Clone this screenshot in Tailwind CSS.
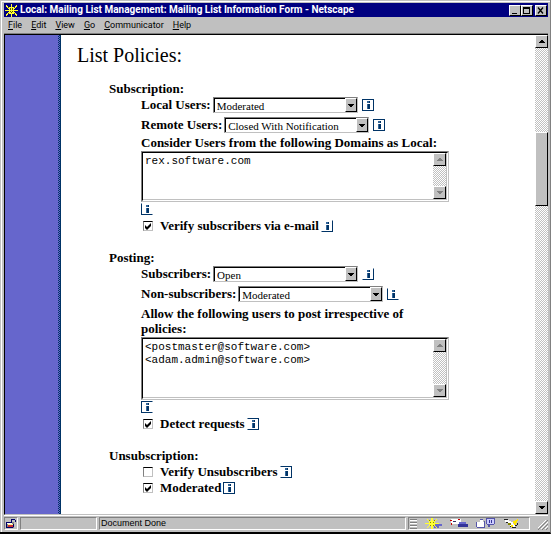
<!DOCTYPE html>
<html lang="en">
<head>
<meta charset="utf-8">
<title>Local: Mailing List Management: Mailing List Information Form - Netscape</title>
<script src="https://cdn.jsdelivr.net/npm/@tailwindcss/browser@4"></script>
</head>
<body class="bg-[#c0c0c0] text-black">
<svg class="hidden">
  <symbol id="i" viewBox="0 0 10 10" shape-rendering="crispEdges"><path d="M4 1h2v2H4zM4 4h2v5H4z" fill="#336699"/><path d="M6 1h1v2H6zM5 4h2v5H5z" fill="#003366"/></symbol>
  <symbol id="up" viewBox="0 0 6 3"><path d="M2 0h2v1h1v1h1v1H0V2h1V1h1z" fill="currentColor"/></symbol>
  <symbol id="down" viewBox="0 0 6 3"><path d="M0 0h6v1H5v1H4v1H2V2H1V1H0z" fill="currentColor"/></symbol>
  <symbol id="sun" viewBox="0 0 14 13" shape-rendering="crispEdges"><path d="M1 1l12 11M13 1L1 12M7 0v13M0 6.500h14" stroke="#ffff33" stroke-width="1.500"/><path d="M4 3h6v7H4z" fill="#ffff33"/><path d="M3 3h1v1H3zM10 3h1v1h-1zM3 9h1v1H3zM10 9h1v1h-1zM5 4h1v2H5zM8 4h1v2H8zM5 7h1v1H5zM6 8h2v1H6zM8 7h1v1H8z" fill="#555500"/></symbol>
</svg>
<div class="min-h-screen flex flex-col pt-px pl-px border-b-2 border-r border-b-black border-r-[#808080]">
<div class="flex-1 flex flex-col border-t border-l border-white pt-px pl-[2px] pr-[2px]">

  <header class="h-[14px] flex items-center bg-[#000080] text-white pl-px pr-px">
    <svg class="w-[13px] h-[13px] mr-[2px]"><use href="#sun"/></svg>
    <h1 class="flex-1 font-[Roboto,sans-serif] font-bold text-[10px] leading-[14px] whitespace-nowrap">Local: Mailing List Management: Mailing List Information Form - Netscape</h1>
    <div class="flex text-black">
      <button aria-label="Minimize" class="w-3 h-[11px] bg-[#c0c0c0] border border-t-white border-l-white border-r-black border-b-black"><svg class="w-full h-full" viewBox="0 0 10 9"><path d="M2 7h5v1H2z"/></svg></button>
      <button aria-label="Maximize" class="w-3 h-[11px] bg-[#c0c0c0] border border-t-white border-l-white border-r-black border-b-black"><svg class="w-full h-full" viewBox="0 0 10 9"><path d="M1 1h7v7H1zM2 3v4h5V3z" fill-rule="evenodd"/></svg></button>
      <button aria-label="Close" class="w-3 h-[11px] ml-[2px] bg-[#c0c0c0] border border-t-white border-l-white border-r-black border-b-black"><svg class="w-full h-full" viewBox="0 0 10 9"><path d="M2 1.500l5 6M7 1.500l-5 6" stroke="#000" stroke-width="1.300"/></svg></button>
    </div>
  </header>

  <nav class="h-4 flex items-center gap-[9px] pl-1 font-[Roboto,sans-serif] text-[9px] leading-4">
    <button><u>F</u>ile</button><button><u>E</u>dit</button><button><u>V</u>iew</button><button><u>G</u>o</button><button><u>C</u>ommunicator</button><button><u>H</u>elp</button>
  </nav>

  <div class="flex-1 flex border-t border-[#808080]">
  <div class="flex-1 flex border-t border-l border-black border-b border-b-[#c0c0c0]">
    <aside class="w-[53px] bg-[#6666cc]"></aside>
    <div class="w-[3px] bg-[repeating-conic-gradient(#003366_0_25%,#6666cc_0_50%)] bg-[length:2px_2px] border-r border-[#003366]"></div>
    <main class="flex-1 bg-white pt-[10px] pl-4 pb-4 font-['Liberation_Serif',serif]">
      <h2 class="text-[20px] leading-5">List Policies:</h2>
      <form class="pl-8 text-[13px] leading-4 font-bold">

        <section class="pt-4">
          <h3>Subscription:</h3>
          <div class="pl-8">
            <div class="h-5 flex items-start">
              <label for="lu">Local Users:</label>
              <div class="ml-[2px] w-[145px] h-4 flex bg-white border border-[#c0c0c0] border-t-[#808080] border-l-[#808080]">
                <select id="lu" class="appearance-none flex-1 min-w-0 pl-[2px] border-t border-l border-black font-normal text-[11px] leading-3 outline-none"><option>Moderated</option></select>
                <span class="w-3 flex items-center justify-center bg-[#c0c0c0] border border-white border-r-black border-b-black pointer-events-none"><svg class="w-[6px] h-[3px]"><use href="#down"/></svg></span>
              </div>
              <a href="#" aria-label="Info" class="ml-1 mt-[2px] w-3 h-3 block border border-[#003366]"><svg class="w-[10px] h-[10px]"><use href="#i"/></svg></a>
            </div>
            <div class="h-[18px] flex items-start">
              <label for="ru">Remote Users:</label>
              <div class="ml-[2px] w-[145px] h-4 flex bg-white border border-[#c0c0c0] border-t-[#808080] border-l-[#808080]">
                <select id="ru" class="appearance-none flex-1 min-w-0 pl-[2px] border-t border-l border-black font-normal text-[11px] leading-3 outline-none"><option>Closed With Notification</option></select>
                <span class="w-3 flex items-center justify-center bg-[#c0c0c0] border border-white border-r-black border-b-black pointer-events-none"><svg class="w-[6px] h-[3px]"><use href="#down"/></svg></span>
              </div>
              <a href="#" aria-label="Info" class="ml-1 mt-[2px] w-3 h-3 block border border-[#003366]"><svg class="w-[10px] h-[10px]"><use href="#i"/></svg></a>
            </div>
            <label for="dom" class="block">Consider Users from the following Domains as Local:</label>
            <div class="w-[308px] h-[51px] border border-[#c0c0c0] border-t-[#808080] border-l-[#808080]">
              <div class="h-full flex border border-white border-t-black border-l-black">
                <div class="flex-1 flex border-b border-r border-[#c0c0c0]">
                <textarea id="dom" class="flex-1 resize-none overflow-hidden pl-[2px] pt-[2px] font-['Liberation_Mono',monospace] font-normal text-[11px] leading-[13px] outline-none">rex.software.com</textarea>
                <div class="w-[13px] flex flex-col justify-between text-[#808080] bg-[repeating-conic-gradient(#c0c0c0_0_25%,#fff_0_50%)] bg-[length:2px_2px]">
                  <span class="h-[13px] flex items-center justify-center bg-[#c0c0c0] border border-white border-r-black border-b-black"><svg class="w-[6px] h-[3px]"><use href="#up"/></svg></span>
                  <span class="h-[13px] flex items-center justify-center bg-[#c0c0c0] border border-white border-r-black border-b-black"><svg class="w-[6px] h-[3px]"><use href="#down"/></svg></span>
                </div>
                </div>
              </div>
            </div>
            <a href="#" aria-label="Info" class="mt-px w-3 h-3 block border border-[#003366] border-t-transparent border-r-transparent"><svg class="w-[10px] h-[10px]"><use href="#i"/></svg></a>
            <div class="mt-[3px] flex items-center">
              <span class="relative ml-[2px] mr-[7px] w-[10px] h-[10px]"><input type="checkbox" id="vs" checked class="peer appearance-none block w-[10px] h-[10px] border border-[#c0c0c0] border-t-black border-l-[#808080] bg-white"><svg class="hidden peer-checked:block absolute inset-0 pointer-events-none" viewBox="0 0 10 10"><path d="M2 4v3l2 2 4-4V2L4 6z"/></svg></span>
              <label for="vs">Verify subscribers via e-mail</label>
              <a href="#" aria-label="Info" class="ml-[2px] w-3 h-3 block border border-[#003366] border-t-transparent border-l-transparent"><svg class="w-[10px] h-[10px]"><use href="#i"/></svg></a>
            </div>
          </div>
        </section>

        <section class="pt-4">
          <h3>Posting:</h3>
          <div class="pl-8">
            <div class="h-5 flex items-start">
              <label for="sb">Subscribers:</label>
              <div class="ml-[2px] w-[145px] h-4 flex bg-white border border-[#c0c0c0] border-t-[#808080] border-l-[#808080]">
                <select id="sb" class="appearance-none flex-1 min-w-0 pl-[2px] border-t border-l border-black font-normal text-[11px] leading-3 outline-none"><option>Open</option></select>
                <span class="w-3 flex items-center justify-center bg-[#c0c0c0] border border-white border-r-black border-b-black pointer-events-none"><svg class="w-[6px] h-[3px]"><use href="#down"/></svg></span>
              </div>
              <a href="#" aria-label="Info" class="ml-1 mt-[2px] w-3 h-3 block border border-[#003366] border-t-transparent border-l-transparent"><svg class="w-[10px] h-[10px]"><use href="#i"/></svg></a>
            </div>
            <div class="h-5 flex items-start">
              <label for="ns">Non-subscribers:</label>
              <div class="ml-[2px] w-[145px] h-4 flex bg-white border border-[#c0c0c0] border-t-[#808080] border-l-[#808080]">
                <select id="ns" class="appearance-none flex-1 min-w-0 pl-[2px] border-t border-l border-black font-normal text-[11px] leading-3 outline-none"><option>Moderated</option></select>
                <span class="w-3 flex items-center justify-center bg-[#c0c0c0] border border-white border-r-black border-b-black pointer-events-none"><svg class="w-[6px] h-[3px]"><use href="#down"/></svg></span>
              </div>
              <a href="#" aria-label="Info" class="ml-1 mt-[2px] w-3 h-3 block border border-[#003366] border-t-transparent border-r-transparent"><svg class="w-[10px] h-[10px]"><use href="#i"/></svg></a>
            </div>
            <label for="al" class="block w-[308px] leading-[15px]">Allow the following users to post irrespective of policies:</label>
            <div class="mt-px w-[308px] h-[63px] border border-[#c0c0c0] border-t-[#808080] border-l-[#808080]">
              <div class="h-full flex border border-white border-t-black border-l-black">
                <div class="flex-1 flex border-b border-r border-[#c0c0c0]">
                <textarea id="al" class="flex-1 resize-none overflow-hidden pl-[2px] pt-[2px] font-['Liberation_Mono',monospace] font-normal text-[11px] leading-[13px] outline-none">&lt;postmaster@software.com&gt;
&lt;adam.admin@software.com&gt;</textarea>
                <div class="w-[13px] flex flex-col justify-between text-[#808080] bg-[repeating-conic-gradient(#c0c0c0_0_25%,#fff_0_50%)] bg-[length:2px_2px]">
                  <span class="h-[13px] flex items-center justify-center bg-[#c0c0c0] border border-white border-r-black border-b-black"><svg class="w-[6px] h-[3px]"><use href="#up"/></svg></span>
                  <span class="h-[13px] flex items-center justify-center bg-[#c0c0c0] border border-white border-r-black border-b-black"><svg class="w-[6px] h-[3px]"><use href="#down"/></svg></span>
                </div>
                </div>
              </div>
            </div>
            <a href="#" aria-label="Info" class="mt-px w-3 h-3 block border border-[#003366] border-r-transparent"><svg class="w-[10px] h-[10px]"><use href="#i"/></svg></a>
            <div class="mt-[3px] flex items-center">
              <span class="relative ml-[2px] mr-[7px] w-[10px] h-[10px]"><input type="checkbox" id="dr" checked class="peer appearance-none block w-[10px] h-[10px] border border-[#c0c0c0] border-t-black border-l-[#808080] bg-white"><svg class="hidden peer-checked:block absolute inset-0 pointer-events-none" viewBox="0 0 10 10"><path d="M2 4v3l2 2 4-4V2L4 6z"/></svg></span>
              <label for="dr">Detect requests</label>
              <a href="#" aria-label="Info" class="ml-[2px] w-3 h-3 block border border-[#003366] border-l-transparent"><svg class="w-[10px] h-[10px]"><use href="#i"/></svg></a>
            </div>
          </div>
        </section>

        <section class="pt-4">
          <h3>Unsubscription:</h3>
          <div class="pl-8">
            <div class="flex items-center">
              <span class="relative ml-[2px] mr-[7px] w-[10px] h-[10px]"><input type="checkbox" id="vu" class="peer appearance-none block w-[10px] h-[10px] border border-[#c0c0c0] border-t-black border-l-[#808080] bg-white"><svg class="hidden peer-checked:block absolute inset-0 pointer-events-none" viewBox="0 0 10 10"><path d="M2 4v3l2 2 4-4V2L4 6z"/></svg></span>
              <label for="vu">Verify Unsubscribers</label>
              <a href="#" aria-label="Info" class="ml-[2px] w-3 h-3 block border border-[#003366] border-l-transparent"><svg class="w-[10px] h-[10px]"><use href="#i"/></svg></a>
            </div>
            <div class="flex items-center">
              <span class="relative ml-[2px] mr-[7px] w-[10px] h-[10px]"><input type="checkbox" id="mo" checked class="peer appearance-none block w-[10px] h-[10px] border border-[#c0c0c0] border-t-black border-l-[#808080] bg-white"><svg class="hidden peer-checked:block absolute inset-0 pointer-events-none" viewBox="0 0 10 10"><path d="M2 4v3l2 2 4-4V2L4 6z"/></svg></span>
              <label for="mo">Moderated</label>
              <a href="#" aria-label="Info" class="ml-[2px] w-3 h-3 block border border-[#003366]"><svg class="w-[10px] h-[10px]"><use href="#i"/></svg></a>
            </div>
          </div>
        </section>
      </form>
    </main>
    <div class="w-[13px] flex flex-col bg-[repeating-conic-gradient(#c0c0c0_0_25%,#fff_0_50%)] bg-[length:2px_2px]">
      <button aria-label="Scroll up" class="h-[13px] flex items-center justify-center bg-[#c0c0c0] border border-white border-r-black border-b-black"><svg class="w-[6px] h-[3px]"><use href="#up"/></svg></button>
      <div class="grow-[84]"></div>
      <div class="grow-[72] bg-[#c0c0c0] border border-white border-r-black border-b-black"></div>
      <div class="grow-[296]"></div>
      <button aria-label="Scroll down" class="h-[13px] flex items-center justify-center bg-[#c0c0c0] border border-white border-r-black border-b-black"><svg class="w-[6px] h-[3px]"><use href="#down"/></svg></button>
    </div>
  </div>
  </div>

  <footer class="border-t border-white flex gap-[2px] pt-px pb-[2px] font-['Liberation_Sans',sans-serif] text-[9px] leading-[11px]">
    <div class="w-[14px] h-[13px] border border-[#808080] border-r-white border-b-white"><svg class="w-3 h-[11px]" viewBox="0 0 12 11" shape-rendering="crispEdges"><path d="M1 4h8v6H1z" fill="#808080"/><path d="M1 4h6v1H1zM1 9h7v1H1zM1 4h1v6H1zM6 1h4v1H6zM6 2h1v3H6zM10 2h1v2h-1zM8 6h1v3H8z" fill="#000066"/><path d="M3 7h5v2H3z" fill="#cc3333"/><path d="M3 6h5v1H3z" fill="#ffff99"/><path d="M2 5h5v1H2z" fill="#fff"/></svg></div>
    <div class="w-[77px] border border-[#808080] border-r-white border-b-white"></div>
    <div class="flex-1 h-[13px] pl-px border border-[#808080] border-r-white border-b-white">Document Done</div>
    <div class="w-[122px] h-[13px] flex items-center gap-2 pr-2 border border-[#808080] border-r-white border-b-white">
      <svg class="w-2 h-[11px]" viewBox="0 0 8 11" shape-rendering="crispEdges"><path d="M1 1h7v1H1zM1 4h7v1H1zM1 7h7v1H1zM1 10h7v1H1z" fill="#808080"/><path d="M1 2h7v1H1zM1 5h7v1H1zM1 8h7v1H1z" fill="#fff"/></svg>
      <svg class="w-[18px] h-[11px]" viewBox="0 0 18 11" shape-rendering="crispEdges"><path d="M10 6h7v2h-7zM9 8h5v2H9z" fill="#6666cc"/><path d="M2 1h1v1H2zM3 2h1v1H3zM11 1h1v1h-1zM10 2h1v1h-1zM2 9h1v1H2zM3 8h1v1H3zM11 9h1v1h-1zM10 8h1v1h-1zM6 0h2v11H6zM0 5h14v1H0zM4 3h6v5H4z" fill="#ffff33"/><path d="M4 2h1v1H4zM9 2h1v1H9zM5 4h1v1H5zM8 4h1v1H8zM5 7h1v1H5zM8 7h1v1H8z" fill="#888800"/></svg>
      <svg class="w-[18px] h-[11px]" viewBox="0 0 18 11" shape-rendering="crispEdges"><path d="M1 1h10v5H1z" fill="#fff"/><path d="M0 2h2v1H0zM1 5h1v2H1zM8 1h2v1H8z" fill="#c00"/><path d="M9 4h7v3H9z" fill="#6666cc"/><path d="M8 6h10v3H8z" fill="#333399"/><path d="M3 3h3v1H3z" fill="#333366"/></svg>
      <svg class="w-[20px] h-[11px]" viewBox="0 0 20 11" shape-rendering="crispEdges"><path d="M1 4h7v5H1zM4 2h3v2H4z" fill="#fff"/><path d="M0 4h1v5H0zM1 9h8v1H1zM8 3h1v6H8zM4 1h3v1H4zM10 0h9v1h-9zM10 1h1v5h-1zM18 1h1v5h-1zM11 6h7v1h-7zM12 7h2v2h-2z" fill="#5555aa"/><path d="M11 1h7v5h-7z" fill="#ccccff"/><path d="M13 2h1v3h-1zM15 2h1v3h-1z" fill="#333399"/></svg>
      <svg class="w-[18px] h-[11px]" viewBox="0 0 18 11" shape-rendering="crispEdges"><path d="M2 2h4v1h2v1h2v2h2v3H9V8H7V6H5V4H2z" fill="#fff"/><path d="M1 1h4v1H1zM3 4h2v1H3zM5 6h2v1H5zM7 8h2v1H7zM9 9h4v1H9zM12 7h2v1h-2zM14 5h1v2h-1z" fill="#222"/><path d="M10 3h2V2h2V1h1v2h-1v2h-1v2h-2V5h-1zM8 7h2v2H8z" fill="#ffe600"/><path d="M5 5h3v2H5z" fill="#888800"/></svg>
    </div>
    <div class="flex-none w-4 flex items-end justify-end"><svg class="w-[10px] h-[10px]" viewBox="0 0 10 10"><path d="M0 10L10 0M4 10l6-6M8 10l2-2" stroke="#808080"/><path d="M-1 9L9-1M3 9l7-7M7 9l3-3" stroke="#fff"/></svg></div>
  </footer>
</div>
</div>
</body>
</html>
